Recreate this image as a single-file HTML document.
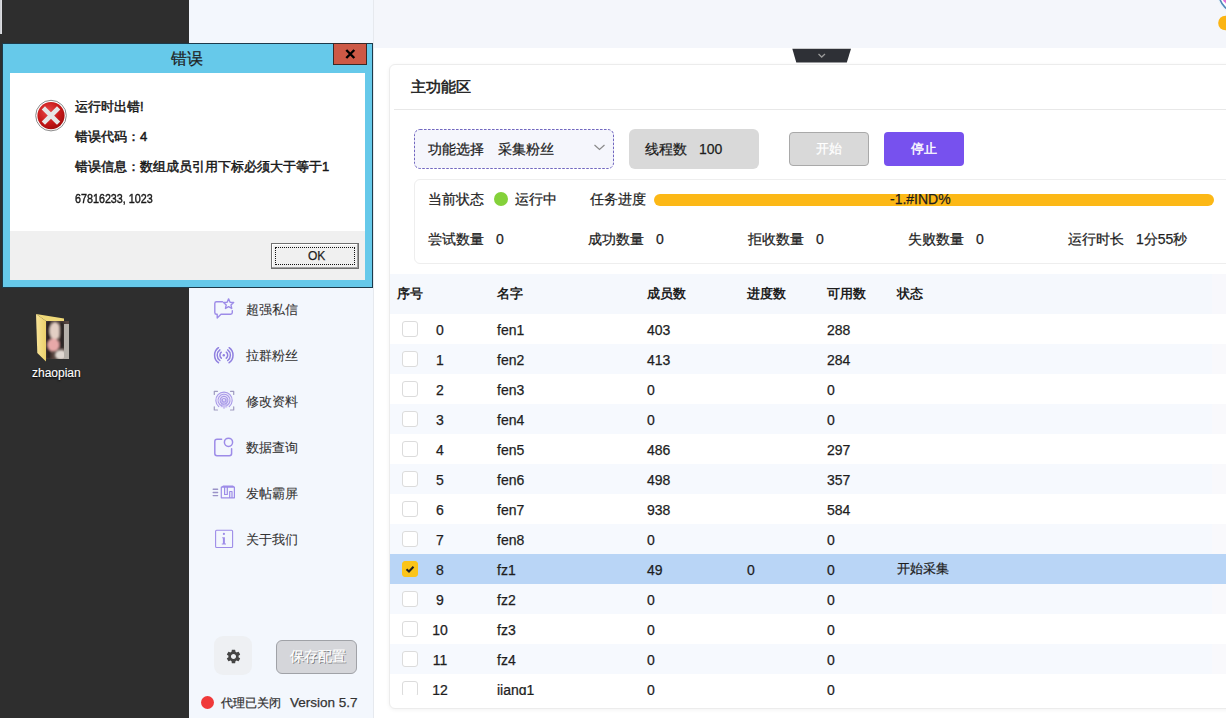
<!DOCTYPE html>
<html><head><meta charset="utf-8">
<style>
*{box-sizing:border-box;margin:0;padding:0}
html,body{width:1226px;height:718px;overflow:hidden;background:#fff;font-family:"Liberation Sans",sans-serif;color:#1e1e1e;-webkit-text-stroke:0.25px currentColor}
.a{position:absolute}
#desk{left:0;top:0;width:189px;height:718px;background:#2e2e2e}
#side{left:189px;top:0;width:185px;height:718px;background:#f3f7fd;border-right:1px solid #e6e9ee}
#hdr{left:374px;top:0;width:852px;height:48px;background:#f4f6fb}
#card{left:389px;top:64px;width:860px;height:645px;border:1px solid #ececec;border-radius:6px;background:#fff;box-shadow:0 1px 4px rgba(0,0,0,0.05)}
.t14{font-size:14px;line-height:16px;white-space:nowrap}
.b{font-weight:bold;-webkit-text-stroke:0}
.cbx{width:16px;height:16px;border:1.5px solid #dcdcdc;border-radius:3px;background:#fff}
.cbx.on{background:#fbc419;border-color:#fbc419}
.cbx svg{position:absolute;left:-1.5px;top:-1.5px}
.t13{font-size:13px;line-height:15px;white-space:nowrap}
</style></head><body>
<div class="a" id="desk"></div>
<div class="a" style="left:0;top:0;width:2px;height:34px;background:linear-gradient(90deg,#c8cacf,#e2e3e6)"></div>
<div class="a" id="side"></div>
<div class="a" id="hdr"></div>
<div class="a" id="card"></div>
<div class="a t14" style="left:411px;top:78px;font-size:15px;line-height:17px;-webkit-text-stroke:0.55px #1e1e1e">主功能区</div>
<div class="a" style="left:394px;top:109px;width:832px;height:1px;background:#e8e8e8"></div>

<!-- controls row -->
<svg class="a" style="left:414px;top:129px" width="200" height="40" viewBox="0 0 200 40"><rect x="0.5" y="0.5" width="199" height="39" rx="5.5" fill="#f5f6fc" stroke="#7268c0" stroke-width="1" stroke-dasharray="2.6 1.4"/></svg>
<div class="a t14" style="left:428px;top:141px">功能选择</div>
<div class="a t14" style="left:498px;top:141px">采集粉丝</div>
<div class="a" style="left:629px;top:129px;width:130px;height:40px;border-radius:6px;background:#d9d9d9"></div>
<div class="a t14" style="left:645px;top:141px">线程数</div>
<div class="a t14" style="left:699px;top:141px">100</div>
<div class="a" style="left:789px;top:132px;width:80px;height:34px;border:1px solid #a9a9a9;border-radius:4px;background:#d9d9d9"></div>
<div class="a t13" style="left:816px;top:141px;color:#fff">开始</div>
<div class="a" style="left:884px;top:132px;width:80px;height:34px;border-radius:4px;background:#7751ee"></div>
<div class="a t13" style="left:911px;top:141px;color:#fff;-webkit-text-stroke:0.4px #fff">停止</div>

<!-- status panel -->
<div class="a" style="left:414px;top:179px;width:830px;height:85px;border:1px solid #eeeeee;border-radius:6px;background:#fff"></div>
<div class="a t14" style="left:428px;top:191px">当前状态</div>
<div class="a" style="left:494px;top:192px;width:14px;height:14px;border-radius:50%;background:#84d13a"></div>
<div class="a t14" style="left:515px;top:191px">运行中</div>
<div class="a t14" style="left:590px;top:191px">任务进度</div>
<div class="a" style="left:654px;top:194px;width:560px;height:12px;border-radius:6px;background:#fcb816"></div>
<div class="a t14" style="left:890px;top:191px">-1.#IND%</div>
<div class="a t14" style="left:428px;top:231px">尝试数量</div>
<div class="a t14" style="left:496px;top:231px">0</div>
<div class="a t14" style="left:588px;top:231px">成功数量</div>
<div class="a t14" style="left:656px;top:231px">0</div>
<div class="a t14" style="left:748px;top:231px">拒收数量</div>
<div class="a t14" style="left:816px;top:231px">0</div>
<div class="a t14" style="left:908px;top:231px">失败数量</div>
<div class="a t14" style="left:976px;top:231px">0</div>
<div class="a t14" style="left:1068px;top:231px">运行时长</div>
<div class="a t14" style="left:1136px;top:231px">1分55秒</div>

<!-- table -->
<div class="a" id="tbl" style="left:390px;top:274px;width:836px;height:421px;overflow:hidden">
<div class="a th" style="left:0;top:0;width:822px;height:40px;background:#f5f8fd"></div>
<div class="a" style="left:822px;top:0;width:14px;height:40px;background:#f8f8fc"></div>
<div class="a t13 b" style="left:7px;top:12px">序号</div>
<div class="a t13 b" style="left:107px;top:12px">名字</div>
<div class="a t13 b" style="left:257px;top:12px">成员数</div>
<div class="a t13 b" style="left:357px;top:12px">进度数</div>
<div class="a t13 b" style="left:437px;top:12px">可用数</div>
<div class="a t13 b" style="left:507px;top:12px">状态</div>
<div class="a" style="left:0;top:40px;width:822px;height:30px;background:#fff"></div>
<div class="a cbx" style="left:12px;top:47px"></div>
<div class="a t14 num" style="left:30px;top:48px;width:40px;text-align:center">0</div>
<div class="a t14" style="left:107px;top:48px">fen1</div>
<div class="a t14" style="left:257px;top:48px">403</div>
<div class="a t14" style="left:437px;top:48px">288</div>
<div class="a" style="left:0;top:70px;width:822px;height:30px;background:#f6f9fe"></div>
<div class="a" style="left:822px;top:70px;width:14px;height:30px;background:#f9f9fc"></div>
<div class="a cbx" style="left:12px;top:77px"></div>
<div class="a t14 num" style="left:30px;top:78px;width:40px;text-align:center">1</div>
<div class="a t14" style="left:107px;top:78px">fen2</div>
<div class="a t14" style="left:257px;top:78px">413</div>
<div class="a t14" style="left:437px;top:78px">284</div>
<div class="a" style="left:0;top:100px;width:822px;height:30px;background:#fff"></div>
<div class="a cbx" style="left:12px;top:107px"></div>
<div class="a t14 num" style="left:30px;top:108px;width:40px;text-align:center">2</div>
<div class="a t14" style="left:107px;top:108px">fen3</div>
<div class="a t14" style="left:257px;top:108px">0</div>
<div class="a t14" style="left:437px;top:108px">0</div>
<div class="a" style="left:0;top:130px;width:822px;height:30px;background:#f6f9fe"></div>
<div class="a" style="left:822px;top:130px;width:14px;height:30px;background:#f9f9fc"></div>
<div class="a cbx" style="left:12px;top:137px"></div>
<div class="a t14 num" style="left:30px;top:138px;width:40px;text-align:center">3</div>
<div class="a t14" style="left:107px;top:138px">fen4</div>
<div class="a t14" style="left:257px;top:138px">0</div>
<div class="a t14" style="left:437px;top:138px">0</div>
<div class="a" style="left:0;top:160px;width:822px;height:30px;background:#fff"></div>
<div class="a cbx" style="left:12px;top:167px"></div>
<div class="a t14 num" style="left:30px;top:168px;width:40px;text-align:center">4</div>
<div class="a t14" style="left:107px;top:168px">fen5</div>
<div class="a t14" style="left:257px;top:168px">486</div>
<div class="a t14" style="left:437px;top:168px">297</div>
<div class="a" style="left:0;top:190px;width:822px;height:30px;background:#f6f9fe"></div>
<div class="a" style="left:822px;top:190px;width:14px;height:30px;background:#f9f9fc"></div>
<div class="a cbx" style="left:12px;top:197px"></div>
<div class="a t14 num" style="left:30px;top:198px;width:40px;text-align:center">5</div>
<div class="a t14" style="left:107px;top:198px">fen6</div>
<div class="a t14" style="left:257px;top:198px">498</div>
<div class="a t14" style="left:437px;top:198px">357</div>
<div class="a" style="left:0;top:220px;width:822px;height:30px;background:#fff"></div>
<div class="a cbx" style="left:12px;top:227px"></div>
<div class="a t14 num" style="left:30px;top:228px;width:40px;text-align:center">6</div>
<div class="a t14" style="left:107px;top:228px">fen7</div>
<div class="a t14" style="left:257px;top:228px">938</div>
<div class="a t14" style="left:437px;top:228px">584</div>
<div class="a" style="left:0;top:250px;width:822px;height:30px;background:#f6f9fe"></div>
<div class="a" style="left:822px;top:250px;width:14px;height:30px;background:#f9f9fc"></div>
<div class="a cbx" style="left:12px;top:257px"></div>
<div class="a t14 num" style="left:30px;top:258px;width:40px;text-align:center">7</div>
<div class="a t14" style="left:107px;top:258px">fen8</div>
<div class="a t14" style="left:257px;top:258px">0</div>
<div class="a t14" style="left:437px;top:258px">0</div>
<div class="a" style="left:0;top:280px;width:836px;height:30px;background:#b9d5f6"></div>
<div class="a cbx on" style="left:12px;top:287px"><svg width="16" height="16" viewBox="0 0 16 16"><path d="M4.5 8.2 L7 10.5 L11.5 5.8" fill="none" stroke="#222" stroke-width="2"/></svg></div>
<div class="a t14 num" style="left:30px;top:288px;width:40px;text-align:center">8</div>
<div class="a t14" style="left:107px;top:288px">fz1</div>
<div class="a t14" style="left:257px;top:288px">49</div>
<div class="a t14" style="left:357px;top:288px">0</div>
<div class="a t14" style="left:437px;top:288px">0</div>
<div class="a t13" style="left:507px;top:287px">开始采集</div>
<div class="a" style="left:0;top:310px;width:822px;height:30px;background:#f6f9fe"></div>
<div class="a" style="left:822px;top:310px;width:14px;height:30px;background:#f9f9fc"></div>
<div class="a cbx" style="left:12px;top:317px"></div>
<div class="a t14 num" style="left:30px;top:318px;width:40px;text-align:center">9</div>
<div class="a t14" style="left:107px;top:318px">fz2</div>
<div class="a t14" style="left:257px;top:318px">0</div>
<div class="a t14" style="left:437px;top:318px">0</div>
<div class="a" style="left:0;top:340px;width:822px;height:30px;background:#fff"></div>
<div class="a cbx" style="left:12px;top:347px"></div>
<div class="a t14 num" style="left:30px;top:348px;width:40px;text-align:center">10</div>
<div class="a t14" style="left:107px;top:348px">fz3</div>
<div class="a t14" style="left:257px;top:348px">0</div>
<div class="a t14" style="left:437px;top:348px">0</div>
<div class="a" style="left:0;top:370px;width:822px;height:30px;background:#f6f9fe"></div>
<div class="a" style="left:822px;top:370px;width:14px;height:30px;background:#f9f9fc"></div>
<div class="a cbx" style="left:12px;top:377px"></div>
<div class="a t14 num" style="left:30px;top:378px;width:40px;text-align:center">11</div>
<div class="a t14" style="left:107px;top:378px">fz4</div>
<div class="a t14" style="left:257px;top:378px">0</div>
<div class="a t14" style="left:437px;top:378px">0</div>
<div class="a" style="left:0;top:400px;width:822px;height:30px;background:#fff"></div>
<div class="a cbx" style="left:12px;top:407px"></div>
<div class="a t14 num" style="left:30px;top:408px;width:40px;text-align:center">12</div>
<div class="a t14" style="left:107px;top:408px">jiang1</div>
<div class="a t14" style="left:257px;top:408px">0</div>
<div class="a t14" style="left:437px;top:408px">0</div>

</div>

<!-- sidebar -->
<svg class="a" style="left:189px;top:280px" width="184" height="290" viewBox="189 280 184 290" fill="none" stroke="#9d8ce8" stroke-width="1.4" stroke-linecap="round" stroke-linejoin="round">
  <!-- chat star -->
  <path d="M222.5 301.8 H216.5 Q214.8 301.8 214.8 303.5 V312.5 Q214.8 314.3 216.5 314.3 H217.2 V318 L221 314.3 H230.6 Q232.3 314.3 232.3 312.6 V310.8"/>
  <path d="M228.60 298.90 L230.07 302.18 L233.64 302.56 L230.98 304.97 L231.72 308.49 L228.60 306.70 L225.48 308.49 L226.22 304.97 L223.56 302.56 L227.13 302.18 Z"/>
  <!-- broadcast -->
  <circle cx="223.8" cy="355.2" r="1.2" fill="#9080e0" stroke="none"/>
  <path d="M221.31 352.20 A3.9 3.9 0 0 0 221.31 358.20 M226.29 352.20 A3.9 3.9 0 0 1 226.29 358.20 M219.87 349.90 A6.6 6.6 0 0 0 219.87 360.50 M227.73 349.90 A6.6 6.6 0 0 1 227.73 360.50 M218.47 347.70 A9.2 9.2 0 0 0 218.47 362.70 M229.13 347.70 A9.2 9.2 0 0 1 229.13 362.70" stroke="#9080e0" stroke-width="1.5"/>
  <!-- fingerprint -->
  <path d="M214.3 394.5 V391.3 H217.5 M230.5 391.3 H233.7 V394.5 M233.7 406.8 V410 H230.5 M217.5 410 H214.3 V406.8" stroke="#9f9bc0" stroke-width="1.2"/>
  <circle cx="224" cy="400.3" r="8.2" fill="#ece8fb" stroke="none"/>
  <path d="M218.73 406.58 A8.2 8.2 0 1 1 229.27 406.58" stroke-width="1.1" stroke="#a89ae8"/>
  <path d="M221.95 405.94 A6.0 6.0 0 1 1 227.00 405.50" stroke-width="1.1" stroke="#a89ae8"/>
  <path d="M223.66 404.19 A3.9 3.9 0 1 1 225.01 404.07" stroke-width="1.1" stroke="#a89ae8"/>
  <path d="M223.69 402.07 A1.8 1.8 0 1 1 224.90 401.86" stroke-width="1.1" stroke="#a89ae8"/>
  <path d="M222 399 V406.5 M226 399 V407 M224 401 V408.3" stroke="#a89ae8" stroke-width="1"/>
  <!-- data -->
  <path d="M221.6 439.3 H217 Q214.8 439.3 214.8 441.5 V453.5 Q214.8 455.7 217 455.7 H229.4 Q231.6 455.7 231.6 453.5 V448.8" stroke-width="1.5"/>
  <circle cx="228.5" cy="442.3" r="4.1" stroke-width="1.5"/>
  <!-- box -->
  <path d="M213.2 489.3 H217.6 M213.2 492.5 H217.6 M213.2 495.6 H217.6" stroke="#9a92c8"/>
  <path d="M221.3 487.2 L223.5 486 H232.6 L234.4 487.2 V497.8 H221.3 Z M221.3 487.2 H234.4 M224.6 487.2 V494.5 H227.3 V487.2 M229.7 497.8 V491.5 H232 V497.8" stroke-width="1.2"/>
  <!-- info -->
  <rect x="215.6" y="530.3" width="17" height="17.2" rx="1" stroke-width="1.1"/>
  <circle cx="223.9" cy="533.9" r="1.1" fill="#9d8ce8" stroke="none"/>
  <path d="M222.2 537.2 H224.9 V543.4 H226 V544.4 H221.8 V543.4 H222.9 V538.2 H222.2 Z" fill="#9d8ce8" stroke="none"/>
</svg>
<div class="a t13" style="left:246px;top:301.5px;color:#333;-webkit-text-stroke:0.1px #333">超强私信</div>
<div class="a t13" style="left:246px;top:347.5px;color:#333;-webkit-text-stroke:0.1px #333">拉群粉丝</div>
<div class="a t13" style="left:246px;top:393.5px;color:#333;-webkit-text-stroke:0.1px #333">修改资料</div>
<div class="a t13" style="left:246px;top:439.5px;color:#333;-webkit-text-stroke:0.1px #333">数据查询</div>
<div class="a t13" style="left:246px;top:485.5px;color:#333;-webkit-text-stroke:0.1px #333">发帖霸屏</div>
<div class="a t13" style="left:246px;top:531.5px;color:#333;-webkit-text-stroke:0.1px #333">关于我们</div>

<div class="a" style="left:214px;top:636px;width:38px;height:39px;border-radius:9px;background:#eef0f3"></div>
<svg class="a" style="left:224.5px;top:647.5px" width="17" height="17" viewBox="0 0 24 24"><path fill="#454545" d="M19.14 12.94c.04-.3.06-.61.06-.94 0-.32-.02-.64-.07-.94l2.03-1.58a.49.49 0 0 0 .12-.61l-1.92-3.32a.488.488 0 0 0-.59-.22l-2.39.96c-.5-.38-1.03-.7-1.62-.94l-.36-2.54a.484.484 0 0 0-.48-.41h-3.84c-.24 0-.43.17-.47.41l-.36 2.54c-.59.24-1.13.57-1.62.94l-2.39-.96c-.22-.08-.47 0-.59.22L2.74 8.87c-.12.21-.08.47.12.61l2.03 1.58c-.05.3-.09.63-.09.94s.02.64.07.94l-2.03 1.58a.49.49 0 0 0-.12.61l1.92 3.32c.12.22.37.29.59.22l2.39-.96c.5.38 1.03.7 1.62.94l.36 2.54c.05.24.24.41.48.41h3.84c.24 0 .44-.17.47-.41l.36-2.54c.59-.24 1.13-.56 1.62-.94l2.39.96c.22.08.47 0 .59-.22l1.92-3.32c.12-.22.07-.47-.12-.61l-2.01-1.58zM12 15.6c-1.98 0-3.6-1.62-3.6-3.6s1.62-3.6 3.6-3.6 3.6 1.62 3.6 3.6-1.62 3.6-3.6 3.6z"/></svg>
<div class="a" style="left:276px;top:640px;width:81px;height:34px;border:1.5px solid #a0a2a7;border-radius:6px;background:#d5d6da"></div>
<div class="a t14" style="left:289.5px;top:648.5px;color:#fff;font-size:13.5px;text-shadow:1px 1px 0 #6e7074">保存配置</div>
<div class="a" style="left:201px;top:696px;width:13px;height:13px;border-radius:50%;background:#f0393a"></div>
<div class="a t14" style="left:221px;top:695px;color:#333;font-size:12px">代理已关闭</div>
<div class="a t14" style="left:290px;top:695px;color:#333;font-size:13.5px">Version 5.7</div>

<!-- desktop icon -->
<svg class="a" style="left:30px;top:308px" width="46" height="58" viewBox="30 308 46 58">
<defs><filter id="bl" x="-20%" y="-20%" width="140%" height="140%"><feGaussianBlur stdDeviation="1.1"/></filter>
<linearGradient id="fy" x1="0" y1="0" x2="1" y2="0"><stop offset="0" stop-color="#f8e49a"/><stop offset="1" stop-color="#ecd06a"/></linearGradient>
<clipPath id="pc"><rect x="46" y="321" width="23" height="38"/></clipPath></defs>
<path d="M36 314 L64 318.5 L64 324 L46 321 Z" fill="#efd978"/>
<g clip-path="url(#pc)">
<rect x="46" y="321" width="23" height="38" fill="#54443f"/>
<g filter="url(#bl)">
<rect x="46" y="321" width="5" height="38" fill="#2e2422"/>
<ellipse cx="55" cy="331" rx="5.5" ry="9" fill="#e3cfc4"/>
<ellipse cx="53.5" cy="345" rx="6" ry="6.5" fill="#e8a8a8"/>
<ellipse cx="61" cy="355" rx="6" ry="5" fill="#e0d8d2"/>
<rect x="59.5" y="322" width="4.5" height="26" fill="#2a2020"/>
</g>
<rect x="64" y="324" width="5" height="35" fill="#b5b0aa"/>

</g>
<path d="M36 314 L46 321 L46 361.4 L37.3 353 Z" fill="url(#fy)"/>
</svg>
<div class="a" style="left:32px;top:366px;font-size:12px;line-height:14px;color:#fff;-webkit-text-stroke:0.1px #fff;text-shadow:0 1px 2px #000">zhaopian</div>

<!-- top decorations -->
<svg class="a" style="left:790px;top:47px" width="64" height="18" viewBox="790 47 64 18"><path d="M792.3 48.8 H851 L846.8 62.6 H796.3 Z" fill="#2e3036"/><path d="M818.5 54 L821.7 57 L825 54" fill="none" stroke="#9a9a9a" stroke-width="1.3"/></svg>
<svg class="a" style="left:1200px;top:0" width="26" height="40" viewBox="1200 0 26 40">
<circle cx="1239" cy="-7" r="22" fill="#e6f2fb" opacity="0.7"/>
<circle cx="1239" cy="-7" r="20" fill="#fff" stroke="#4f88b8" stroke-width="1.6"/>
<circle cx="1231" cy="-4" r="9" fill="#e070d8"/>
<circle cx="1225.5" cy="23" r="7.3" fill="#fbb413"/>
</svg>
<svg class="a" style="left:594px;top:144px" width="12" height="7" viewBox="0 0 12 7"><path d="M0.5 1 L5.5 5.5 L10.5 1" fill="none" stroke="#8a8a8a" stroke-width="1.2"/></svg>

<!-- dialog -->
<div class="a" style="left:2px;top:43px;width:371px;height:245px;background:#66c9ea;border:1px solid #1c3a4a"></div>
<div class="a" style="left:333px;top:43px;width:34px;height:22px;background:#cd5946;border:1px solid #3a2a28"></div>
<div class="a t14" style="left:171px;top:50px;font-size:16px;line-height:18px">错误</div>
<div class="a" style="left:10px;top:73px;width:355px;height:158px;background:#fff"></div>
<div class="a" style="left:10px;top:231px;width:355px;height:49px;background:#f0f0f0"></div>
<div class="a t13" style="-webkit-text-stroke:0.45px #111;left:75px;top:99px">运行时出错!</div>
<div class="a t13" style="-webkit-text-stroke:0.45px #111;left:75px;top:129px">错误代码：4</div>
<div class="a t13" style="-webkit-text-stroke:0.45px #111;left:75px;top:159px">错误信息：数组成员引用下标必须大于等于1</div>
<div class="a t13" style="left:75px;top:191.5px;font-size:12.5px;transform:scaleX(0.86);transform-origin:0 0;-webkit-text-stroke:0.4px #111">67816233, 1023</div>
<div class="a" style="left:271px;top:243px;width:88px;height:26px;background:#f0f0f0;border:1px solid #707070;box-shadow:inset -1px -1px 0 #a0a0a0, inset 1px 1px 0 #fff"></div>
<div class="a" style="left:275px;top:247px;width:80px;height:18px;border:1px dotted #111"></div>
<div class="a t13" style="left:308px;top:249px;font-size:12px">OK</div>
<svg class="a" style="left:34px;top:99px" width="34" height="34" viewBox="0 0 34 34">
<defs><radialGradient id="rg" cx="0.4" cy="0.35" r="0.7"><stop offset="0" stop-color="#e84a4a"/><stop offset="0.6" stop-color="#c81818"/><stop offset="1" stop-color="#a00c0c"/></radialGradient></defs>
<circle cx="17" cy="16.6" r="15.3" fill="#fff" stroke="#8a8a8a" stroke-width="1"/>
<circle cx="17" cy="16.6" r="13.6" fill="url(#rg)"/>
<path d="M11 10.6 L23 22.6 M23 10.6 L11 22.6" stroke="#e6e6e6" stroke-width="4.6" stroke-linecap="square"/>
</svg>
<svg class="a" style="left:345px;top:49px" width="11" height="10" viewBox="0 0 11 10"><path d="M1.3 1 L9.3 9 M9.3 1 L1.3 9" stroke="#000" stroke-width="2.4"/></svg>
</body></html>
